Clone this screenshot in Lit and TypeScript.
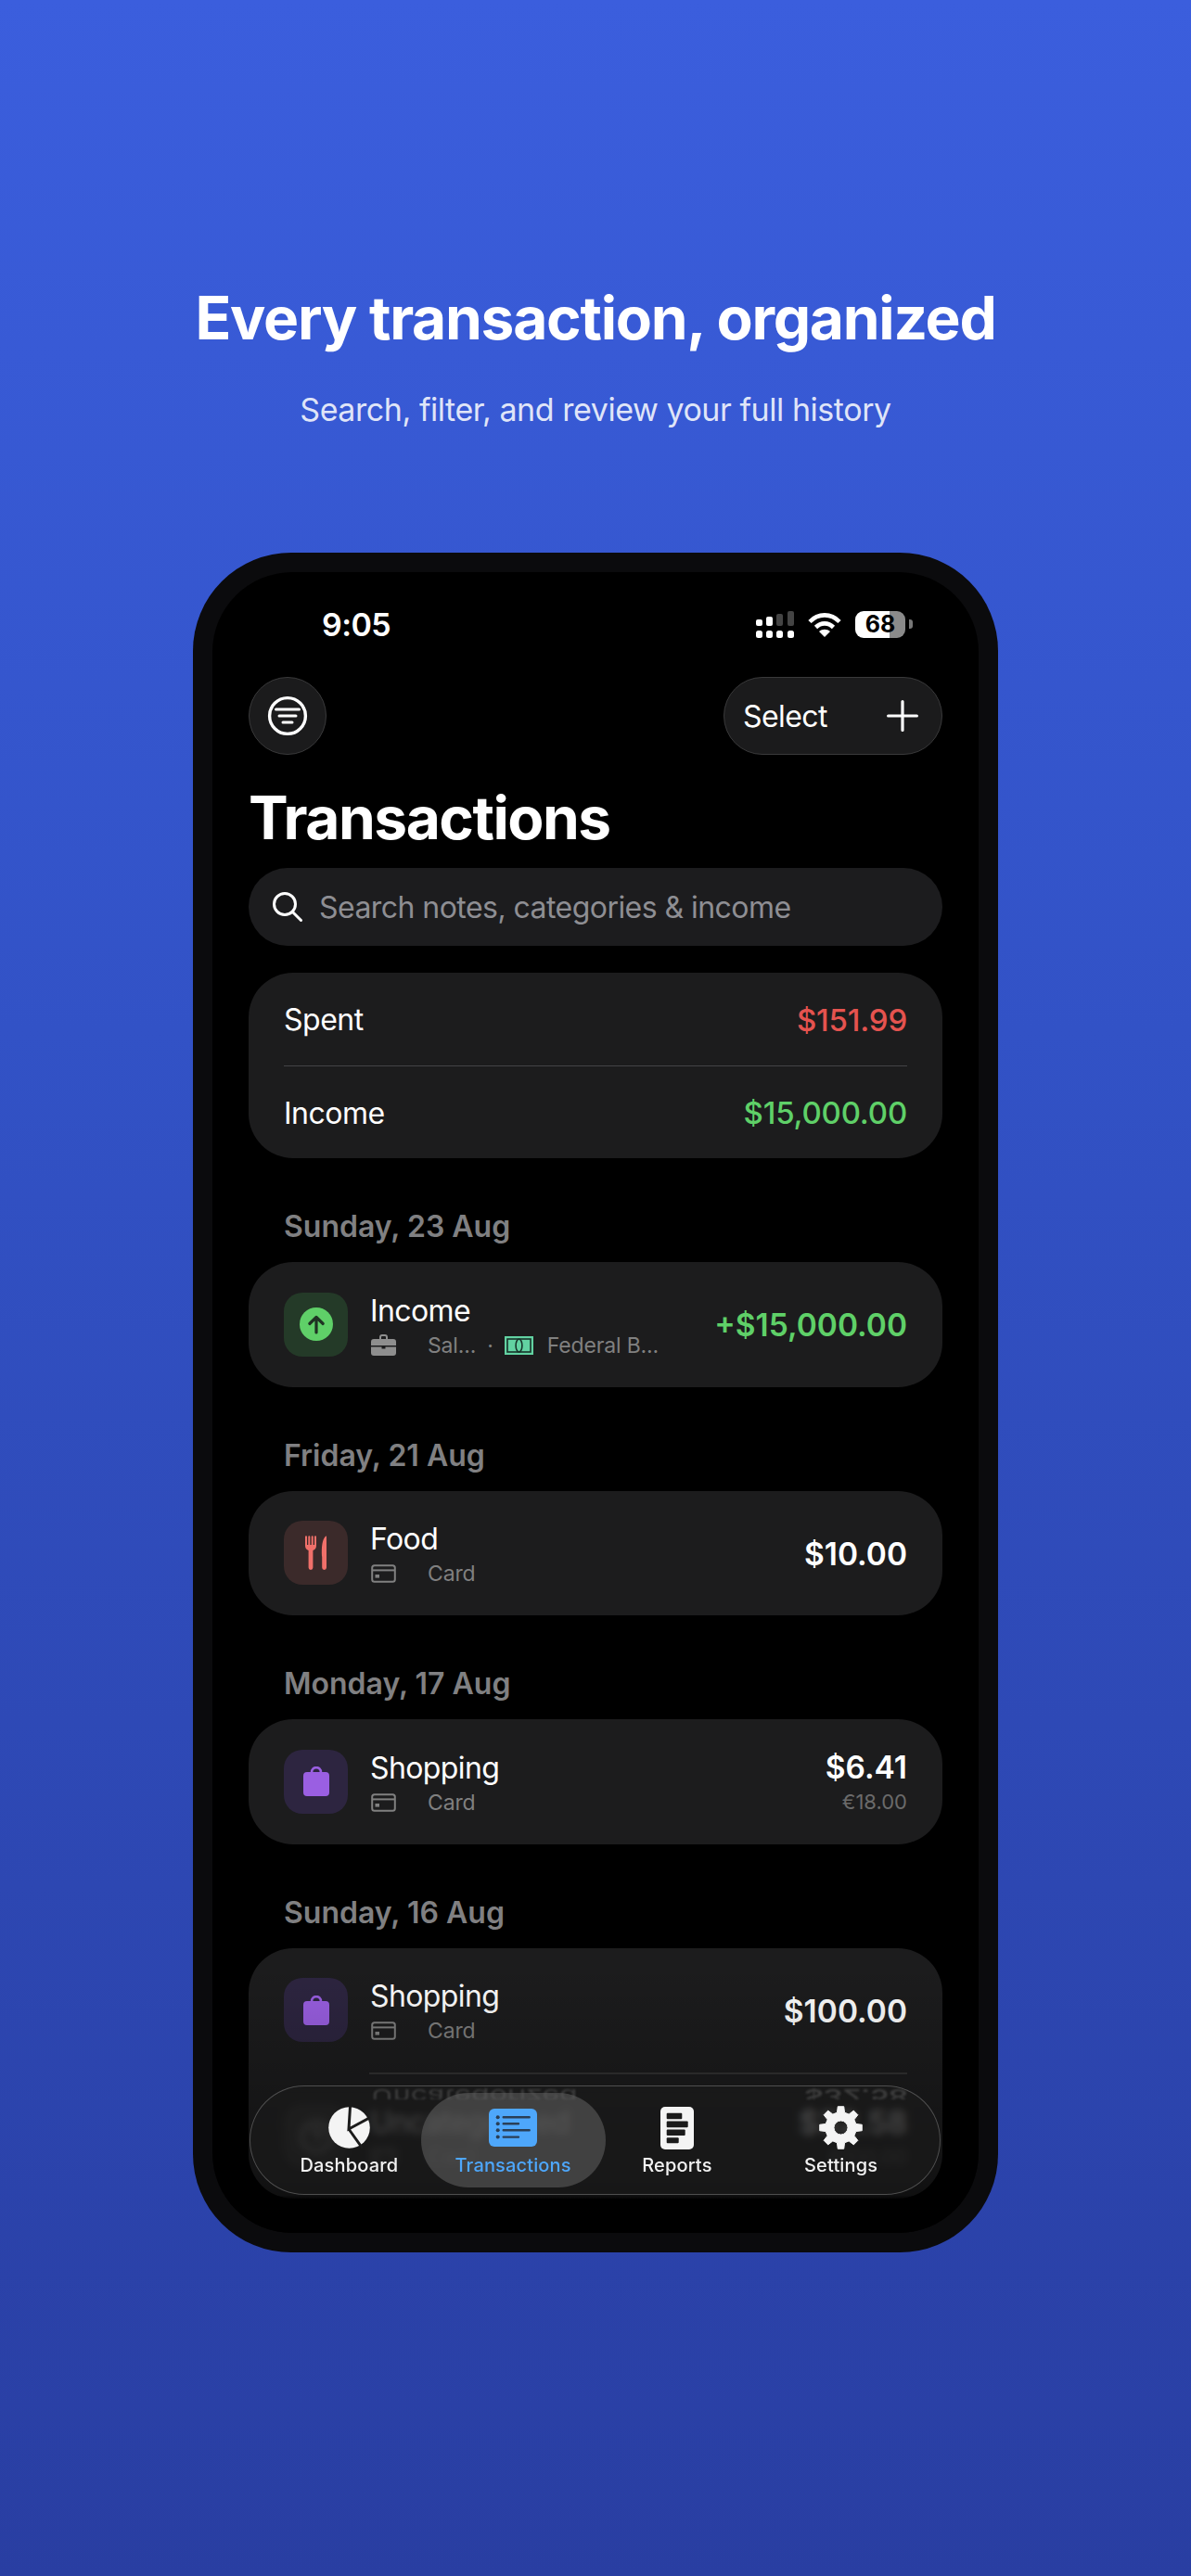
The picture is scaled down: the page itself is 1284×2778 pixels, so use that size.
import { LitElement, html, css, svg } from "lit";
import { customElement } from "lit/decorators.js";

function gearPath(): string {
  const c = 23.5, teeth = 8, rO = 23, rR = 16.8;
  const pts: string[] = [];
  for (let i = 0; i < teeth; i++) {
    const a = (i * 2 * Math.PI) / teeth - Math.PI / 2;
    const s = Math.PI / teeth;
    const list: [number, number][] = [
      [rR, a - s * 0.62],
      [rO, a - s * 0.36],
      [rO, a + s * 0.36],
      [rR, a + s * 0.62],
    ];
    for (const [r, t] of list) {
      pts.push(`${(c + r * Math.cos(t)).toFixed(2)} ${(c + r * Math.sin(t)).toFixed(2)}`);
    }
  }
  const h = 7.5;
  return `M${pts.join("L")}Z M${c - h} ${c}a${h} ${h} 0 1 0 ${2 * h} 0a${h} ${h} 0 1 0 ${-2 * h} 0Z`;
}

const cardIcon = html`<svg class="sub-ic" width="27" height="20" viewBox="0 0 27 20" fill="none"><rect x="1.2" y="1.2" width="24.6" height="17.6" rx="2.5" stroke="#808080" stroke-width="2"/><path d="M1.2 6.4H25.8" stroke="#808080" stroke-width="2"/><rect x="4.5" y="11" width="4.5" height="3.6" fill="#808080"/></svg>`;
const briefcase = html`<svg class="sub-ic" width="27" height="23" viewBox="0 0 27 23"><path fill="#8e8e8e" d="M9 5V3a3 3 0 0 1 3-3h3a3 3 0 0 1 3 3v2h-2V3a1 1 0 0 0-1-1h-3a1 1 0 0 0-1 1v2z"/><path fill="#8e8e8e" d="M3 5h21a3 3 0 0 1 3 3v4H0V8a3 3 0 0 1 3-3zM0 13.6h11.5V15.5h4V13.6H27V20a3 3 0 0 1-3 3H3a3 3 0 0 1-3-3z"/></svg>`;
const money = html`<svg width="31" height="20" viewBox="0 0 31 20"><rect width="31" height="20" fill="#62d2a2"/><rect x="3" y="3" width="25" height="14" fill="none" stroke="#17332a" stroke-width="1.6"/><ellipse cx="15.5" cy="10" rx="3.4" ry="7" fill="none" stroke="#17332a" stroke-width="1.6"/></svg>`;
const arrow = html`<svg width="36" height="36" viewBox="0 0 36 36"><circle cx="18" cy="18" r="18" fill="#5fd068"/><path d="M18 27V11M10.8 17.5 18 10.5l7.2 7" fill="none" stroke="#1f3323" stroke-width="3.2" stroke-linecap="round" stroke-linejoin="round"/></svg>`;
const fork = html`<svg width="23" height="37" viewBox="0 0 23 37"><path fill="#f0706a" d="M0 1.2a1 1 0 0 1 2 0V10h1.3V1.2a1 1 0 0 1 2 0V10h1.4V1.2a1 1 0 0 1 2 0V10H10V1.2a1 1 0 0 1 2 0V11c0 2.600-1.500 4.400-3.600 5V34.500a2.400 2.400 0 0 1-4.800 0V16C1.500 15.400 0 13.600 0 11z"/><path fill="#f0706a" d="M23 1.200V34.500a2.400 2.400 0 0 1-4.800 0V22.500h-.2C17.500 12 18.500 4 22 .8c.4-.4 1-.2 1 .4z"/></svg>`;
const bag = html`<svg width="28" height="32" viewBox="0 0 28 32"><path fill="#9a5fe2" d="M4 6h3.800a6.200 6.200 0 0 1 12.400 0H24a4 4 0 0 1 4 4v18a4 4 0 0 1-4 4H4a4 4 0 0 1-4-4V10a4 4 0 0 1 4-4zM10.400 6h7.200a3.600 3.600 0 0 0-7.200 0z"/></svg>`;
const question = html`<svg width="36" height="36" viewBox="0 0 36 36" fill="none"><circle cx="18" cy="18" r="16" stroke="#aaa" stroke-width="3"/><path d="M13 14a5 5 0 1 1 7 5c-1.500.8-2 1.500-2 3" stroke="#aaa" stroke-width="3" stroke-linecap="round"/></svg>`;

@customElement("app-root")
export class AppRoot extends LitElement {
  static styles = css`
    :host {
      display: block;
      height: 2778px;
      overflow: hidden;
      font-family: Inter, "Liberation Sans", sans-serif;
      color: #fff;
      background: linear-gradient(180deg, #3b5edd 0%, #3252c6 40%, #293ea2 100%);
    }
    .hero {
      padding-top: 305px;
      text-align: center;
    }
    h1 {
      margin: 0;
      font-size: 64px;
      line-height: 76px;
      font-weight: 700;
      letter-spacing: -1.25px;
    }
    .lead {
      margin: 39px 0 0;
      font-size: 34px;
      line-height: 44px;
      letter-spacing: -0.45px;
      color: rgba(255, 255, 255, 0.86);
    }
    .phone {
      box-sizing: border-box;
      width: 868px;
      height: 1833px;
      margin: 132px 0 0 208px;
      padding: 21px;
      background: #0b0b0d;
      border-radius: 106px;
    }
    .screen {
      position: relative;
      height: 100%;
      overflow: hidden;
      background: #000;
      border-radius: 86px;
      padding: 0 39px;
      box-sizing: border-box;
    }
    .status {
      height: 113px;
      padding: 0 0 1px 79px;
      box-sizing: border-box;
      display: flex;
      align-items: center;
      justify-content: space-between;
      font-size: 34px;
      font-weight: 600;
      letter-spacing: -0.6px;
    }
    .status-r {
      display: flex;
      align-items: center;
      gap: 15px;
      padding-right: 32px;
    }
    .batt {
      position: relative;
      width: 54px;
      height: 29px;
      border-radius: 9px;
      overflow: hidden;
      background: linear-gradient(90deg, #fff 0 37px, #8a8a8a 37px);
      color: #000;
      font-size: 25px;
      font-weight: 700;
      line-height: 29px;
      text-align: center;
      letter-spacing: 0;
    }
    .nub {
      width: 4px;
      height: 10px;
      margin-left: -11px;
      border-radius: 0 3px 3px 0;
      background: #777;
    }
    .toolbar {
      display: flex;
      justify-content: space-between;
    }
    .glass {
      box-sizing: border-box;
      height: 84px;
      background: #1b1b1c;
      border: 1.500px solid #3a3a3b;
      border-radius: 42px;
      display: flex;
      align-items: center;
    }
    .round {
      width: 84px;
      justify-content: center;
    }
    .select {
      width: 236px;
      padding: 0 25px 0 20px;
      justify-content: space-between;
      font-size: 32px;
      letter-spacing: -0.6px;
    }
    .title {
      margin: 26px 0 0;
      font-size: 64px;
      line-height: 84px;
      font-weight: 700;
      letter-spacing: -1.5px;
    }
    .search {
      margin-top: 12px;
      height: 84px;
      border-radius: 42px;
      background: #1c1c1e;
      display: flex;
      align-items: center;
      gap: 18px;
      padding-left: 26px;
      font-size: 32px;
      letter-spacing: -0.55px;
      color: #8e8e93;
    }
    .summary {
      margin-top: 29px;
      height: 200px;
      box-sizing: border-box;
      background: #1c1c1d;
      border-radius: 48px;
      padding: 0 38px;
    }
    .sum-row {
      height: 99.500px;
      padding-top: 2px;
      box-sizing: border-box;
      display: flex;
      align-items: center;
      justify-content: space-between;
      font-size: 32px;
      letter-spacing: -0.5px;
    }
    .sum-row + .sum-row {
      height: 100.500px;
      border-top: 1.500px solid #444446;
    }
    .sum-row b {
      font-size: 33px;
      font-weight: 500;
      letter-spacing: -0.2px;
    }
    .red {
      color: #e5534f;
    }
    .green {
      color: #5fd068;
    }
    .date {
      height: 112px;
      box-sizing: border-box;
      padding: 54px 0 0 38px;
      font-size: 32px;
      line-height: 40px;
      font-weight: 600;
      color: #808082;
    }
    .card {
      background: #1c1c1d;
      border-radius: 48px;
    }
    .row {
      height: 134.500px;
      display: flex;
      align-items: center;
      gap: 24px;
      padding: 0 38px;
    }
    .tile {
      flex: none;
      width: 69px;
      height: 69px;
      border-radius: 20px;
      display: flex;
      align-items: center;
      justify-content: center;
    }
    .t-green {
      background: #243a28;
    }
    .t-red {
      background: #3b2a2a;
    }
    .t-purple {
      background: #2d2540;
    }
    .t-gray {
      background: #333;
    }
    .body {
      flex: 1;
      min-width: 0;
      padding-top: 3px;
    }
    .name {
      font-size: 32px;
      line-height: 40px;
      letter-spacing: -0.6px;
    }
    .sub {
      margin: 2px 0 0 1px;
      height: 30px;
      display: flex;
      align-items: center;
      font-size: 23px;
      letter-spacing: -0.15px;
      color: #808080;
    }
    .sub-ic {
      margin-right: 34px;
    }
    .sep {
      margin: 0 12px;
    }
    .sub-gap {
      margin-left: 15px;
    }
    .amt {
      flex: none;
      padding-top: 2px;
      text-align: right;
      font-size: 33.500px;
      line-height: 40px;
      font-weight: 600;
    }
    .fx {
      margin-top: 2px;
      font-size: 22px;
      line-height: 30px;
      font-weight: 400;
      color: #6a6a6a;
    }
    .divider {
      height: 1.500px;
      margin: 0 38px 0 130px;
      background: #333;
    }
    .scrim {
      position: absolute;
      left: 0;
      right: 0;
      bottom: 0;
      height: 290px;
      background: linear-gradient(180deg, rgba(0, 0, 0, 0) 0%, rgba(0, 0, 0, 0.35) 80%, rgba(0, 0, 0, 0.45) 86%, #000 88%);
    }
    nav {
      position: absolute;
      left: 40px;
      bottom: 41px;
      width: 745px;
      height: 118px;
      box-sizing: border-box;
      display: flex;
      padding: 21.500px 18px 0 18px;
      border-radius: 59px;
      border: 1.500px solid rgba(255, 255, 255, 0.24);
      background: rgba(27, 27, 27, 0.72);
      backdrop-filter: blur(4px);
      overflow: hidden;
    }
    .mirror {
      position: absolute;
      top: 2px;
      height: 12px;
      overflow: hidden;
      font-size: 32px;
      line-height: 16px;
      color: #3c3c3c;
      filter: blur(0.8px);
    }
    .mirror span {
      display: block;
      transform: scaleY(-0.65);
      white-space: nowrap;
    }
    .m-a {
      left: 130px;
    }
    .m-b {
      left: 597px;
      font-weight: 600;
    }
    .pill {
      position: absolute;
      left: 184px;
      top: 6.500px;
      width: 199px;
      height: 102px;
      border-radius: 51px;
      background: rgba(94, 94, 94, 0.58);
    }
    .tab {
      position: relative;
      flex: 1;
      display: flex;
      flex-direction: column;
      align-items: center;
      font-size: 20px;
      line-height: 24px;
      font-weight: 500;
      letter-spacing: 0.15px;
      color: #f2f2f2;
    }
    .tab.on {
      color: #4ea7fb;
    }
    .tab-ic {
      height: 46px;
      margin-bottom: 5px;
      display: flex;
      align-items: center;
    }
  `;

  private row(tile: string, icon: unknown, name: string, sub: unknown, amt: unknown) {
    return html`<div class="row">
      <div class="tile ${tile}">${icon}</div>
      <div class="body">
        <div class="name">${name}</div>
        <div class="sub">${sub}</div>
      </div>
      ${amt}
    </div>`;
  }

  render() {
    const card = html`${cardIcon}<span>Card</span>`;
    return html`
      <div class="hero">
        <h1>Every transaction, organized</h1>
        <p class="lead">Search, filter, and review your full history</p>
      </div>
      <div class="phone">
        <div class="screen">
          <div class="status">
            <span>9:05</span>
            <div class="status-r">
              <svg width="41" height="29" viewBox="0 0 41 29" fill="#fff">
                <rect x="0" y="9" width="7" height="7" rx="2"/>
                <rect x="11" y="6" width="7" height="10" rx="2"/>
                <rect x="22" y="3" width="7" height="13" rx="2" fill="#444"/>
                <rect x="34" y="0" width="7" height="16" rx="2" fill="#444"/>
                <rect x="0" y="21" width="7" height="8" rx="2.500"/>
                <rect x="11" y="21" width="7" height="8" rx="2.500"/>
                <rect x="22" y="21" width="7" height="8" rx="2.500"/>
                <rect x="34" y="21" width="7" height="8" rx="2.500"/>
              </svg>
              <svg width="36" height="27" viewBox="0 0 36 27" fill="none" stroke="#fff" stroke-width="4.600">
                <path d="M2 10.500C11 1 25 1 34 10.500"/>
                <path d="M8.500 16.500c5.500-5.500 13.500-5.500 19 0"/>
                <path d="M18 27l-6-6c3.500-3 8.500-3 12 0z" fill="#fff" stroke="none"/>
              </svg>
              <div class="batt">68</div>
              <div class="nub"></div>
            </div>
          </div>
          <div class="toolbar">
            <div class="glass round">
              <svg width="44" height="44" viewBox="0 0 44 44" fill="none" stroke="#fff" stroke-linecap="round">
                <circle cx="22" cy="22" r="19.400" stroke-width="3.400"/>
                <path d="M9.500 15H34.500M13 22H31M17 29H27" stroke-width="3"/>
              </svg>
            </div>
            <div class="glass select">
              <span>Select</span>
              <svg width="34" height="34" viewBox="0 0 34 34" stroke="#fff" stroke-width="3.200" stroke-linecap="round"><path d="M17 1.600V32.400M1.600 17H32.400"/></svg>
            </div>
          </div>
          <div class="title">Transactions</div>
          <div class="search">
            <svg width="32" height="32" viewBox="0 0 32 32" fill="none" stroke="#fff" stroke-width="3" stroke-linecap="round"><circle cx="13" cy="13" r="11.500"/><path d="M21.500 21.500 30.500 30.500"/></svg>
            <span>Search notes, categories & income</span>
          </div>
          <div class="summary">
            <div class="sum-row"><span>Spent</span><b class="red">$151.99</b></div>
            <div class="sum-row"><span>Income</span><b class="green">$15,000.00</b></div>
          </div>
          <div class="date">Sunday, 23 Aug</div>
          <div class="card">
            ${this.row(
              "t-green",
              arrow,
              "Income",
              html`${briefcase}<span>Sal...</span><span class="sep">·</span>${money}<span class="sub-gap">Federal B...</span>`,
              html`<div class="amt green">+$15,000.00</div>`
            )}
          </div>
          <div class="date">Friday, 21 Aug</div>
          <div class="card">
            ${this.row("t-red", fork, "Food", card, html`<div class="amt">$10.00</div>`)}
          </div>
          <div class="date">Monday, 17 Aug</div>
          <div class="card">
            ${this.row("t-purple", bag, "Shopping", card, html`<div class="amt">$6.41<div class="fx">€18.00</div></div>`)}
          </div>
          <div class="date">Sunday, 16 Aug</div>
          <div class="card">
            ${this.row("t-purple", bag, "Shopping", card, html`<div class="amt">$100.00</div>`)}
            <div class="divider"></div>
            ${this.row("t-gray", question, "Uncategorized", card, html`<div class="amt">$32.58<div class="fx">€100.00</div></div>`)}
          </div>
          <div class="scrim"></div>
          <nav>
            <div class="mirror m-a"><span>Uncategorized</span></div>
            <div class="mirror m-b"><span>$32.58</span></div>
            <div class="pill"></div>
            <div class="tab">
              <div class="tab-ic">
                <svg width="45" height="45" viewBox="0 0 45 45">
                  <circle cx="22.500" cy="22.500" r="22.300" fill="#f4f4f4"/>
                  <path d="M23.500 0 22 24 45 11.500M22 24 37 45" fill="none" stroke="#1b1b1b" stroke-width="3"/>
                </svg>
              </div>
              Dashboard
            </div>
            <div class="tab on">
              <div class="tab-ic">
                <svg width="52" height="41" viewBox="0 0 52 41">
                  <rect width="52" height="41" rx="6" fill="#4ea7fb"/>
                  <g fill="#2a3f57"><circle cx="9.700" cy="9.300" r="2"/><circle cx="9.700" cy="16.300" r="2"/><circle cx="9.700" cy="23.300" r="2"/><circle cx="9.700" cy="30.600" r="2"/></g>
                  <path d="M15.700 9.300H43.700M15.700 16.300H32M15.700 23.300H43.700M15.700 30.600H32" stroke="#2a3f57" stroke-width="2.400" stroke-linecap="round"/>
                </svg>
              </div>
              Transactions
            </div>
            <div class="tab">
              <div class="tab-ic">
                <svg width="36" height="46" viewBox="0 0 36 46">
                  <rect width="36" height="46" rx="5" fill="#f4f4f4"/>
                  <g fill="#1b1b1b"><rect x="6.700" y="6.700" width="16.600" height="6.600" rx="1"/><rect x="6.700" y="15.600" width="23" height="6.700" rx="1"/><rect x="6.700" y="24.600" width="20" height="6.400" rx="1"/><rect x="6.700" y="33.300" width="13" height="6" rx="1"/></g>
                </svg>
              </div>
              Reports
            </div>
            <div class="tab">
              <div class="tab-ic">
                <svg width="47" height="47" viewBox="0 0 47 47">
                  ${svg`<path d=${gearPath()} fill="#f4f4f4" fill-rule="evenodd" stroke="#f4f4f4" stroke-width="1" stroke-linejoin="round"/>`}
                </svg>
              </div>
              Settings
            </div>
          </nav>
        </div>
      </div>
    `;
  }
}
